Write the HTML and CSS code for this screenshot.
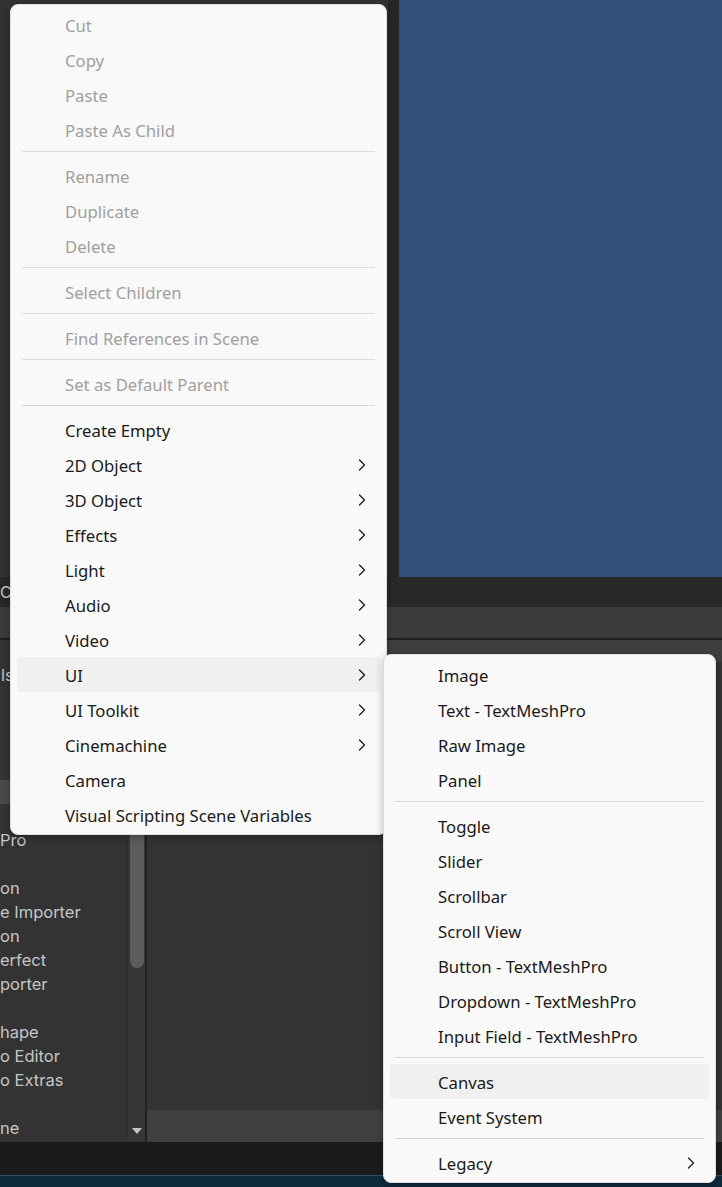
FILE: index.html
```html
<!DOCTYPE html>
<html>
<head>
<meta charset="utf-8">
<title>Hierarchy context menu</title>
<link rel="stylesheet" href="styles.css">
</head>
<body>
<div class="app">
  <div class="top">
    <div class="hier-top"></div>
    <div class="gutter"></div>
    <div class="scene"></div>
  </div>
  <div class="tabbar"><span class="tab">C</span></div>
  <div class="toolbar"></div>
  <div class="rule"></div>
  <div class="lower">
    <div class="tree">
      <div class="crumb">ls</div>
      <div class="rows">
        <div class="row sel"></div>
        <div class="row"></div>
        <div class="row">Pro</div>
        <div class="row"></div>
        <div class="row">on</div>
        <div class="row">e Importer</div>
        <div class="row">on</div>
        <div class="row">erfect</div>
        <div class="row">porter</div>
        <div class="row"></div>
        <div class="row">hape</div>
        <div class="row">o Editor</div>
        <div class="row">o Extras</div>
        <div class="row"></div>
        <div class="row">ne</div>
      </div>
    </div>
    <div class="scroll"><div class="thumb"></div><div class="arrow"></div></div>
    <div class="divider"></div>
    <div class="content">
      <div class="chead"></div>
      <div class="cbody"></div>
      <div class="cfoot"></div>
    </div>
  </div>
  <div class="status"></div>
  <div class="taskbar"></div>
</div>

<div class="menu main">
  <div class="item dis">Cut</div>
  <div class="item dis">Copy</div>
  <div class="item dis">Paste</div>
  <div class="item dis">Paste As Child</div>
  <div class="sep"></div>
  <div class="item dis">Rename</div>
  <div class="item dis">Duplicate</div>
  <div class="item dis">Delete</div>
  <div class="sep"></div>
  <div class="item dis">Select Children</div>
  <div class="sep"></div>
  <div class="item dis">Find References in Scene</div>
  <div class="sep"></div>
  <div class="item dis">Set as Default Parent</div>
  <div class="sep"></div>
  <div class="item">Create Empty</div>
  <div class="item">2D Object<svg class="chev" viewBox="0 0 8 12"><path d="M1.5 1 L6.5 6 L1.5 11"/></svg></div>
  <div class="item">3D Object<svg class="chev" viewBox="0 0 8 12"><path d="M1.5 1 L6.5 6 L1.5 11"/></svg></div>
  <div class="item">Effects<svg class="chev" viewBox="0 0 8 12"><path d="M1.5 1 L6.5 6 L1.5 11"/></svg></div>
  <div class="item">Light<svg class="chev" viewBox="0 0 8 12"><path d="M1.5 1 L6.5 6 L1.5 11"/></svg></div>
  <div class="item">Audio<svg class="chev" viewBox="0 0 8 12"><path d="M1.5 1 L6.5 6 L1.5 11"/></svg></div>
  <div class="item">Video<svg class="chev" viewBox="0 0 8 12"><path d="M1.5 1 L6.5 6 L1.5 11"/></svg></div>
  <div class="item hover">UI<svg class="chev" viewBox="0 0 8 12"><path d="M1.5 1 L6.5 6 L1.5 11"/></svg></div>
  <div class="item">UI Toolkit<svg class="chev" viewBox="0 0 8 12"><path d="M1.5 1 L6.5 6 L1.5 11"/></svg></div>
  <div class="item">Cinemachine<svg class="chev" viewBox="0 0 8 12"><path d="M1.5 1 L6.5 6 L1.5 11"/></svg></div>
  <div class="item">Camera</div>
  <div class="item">Visual Scripting Scene Variables</div>
</div>

<div class="menu sub">
  <div class="item">Image</div>
  <div class="item">Text - TextMeshPro</div>
  <div class="item">Raw Image</div>
  <div class="item">Panel</div>
  <div class="sep"></div>
  <div class="item">Toggle</div>
  <div class="item">Slider</div>
  <div class="item">Scrollbar</div>
  <div class="item">Scroll View</div>
  <div class="item">Button - TextMeshPro</div>
  <div class="item">Dropdown - TextMeshPro</div>
  <div class="item">Input Field - TextMeshPro</div>
  <div class="sep"></div>
  <div class="item hover">Canvas</div>
  <div class="item">Event System</div>
  <div class="sep"></div>
  <div class="item">Legacy<svg class="chev" viewBox="0 0 8 12"><path d="M1.5 1 L6.5 6 L1.5 11"/></svg></div>
</div>
</body>
</html>
```

FILE: styles.css
```css
* { box-sizing: border-box; }
html, body { margin: 0; padding: 0; }
body {
  width: 722px;
  height: 1187px;
  overflow: hidden;
  background: #333333;
  position: relative;
  font-family: "Noto Sans", "Liberation Sans", sans-serif;
}

.app { display: flex; flex-direction: column; height: 1187px; }

.top { display: grid; grid-template-columns: 388px 11px 1fr; height: 577px; }
.hier-top { background: #323232; }
.gutter { background: #262626; }
.scene { background: #314f7a; }

.tabbar {
  height: 30px;
  background: #282828;
  display: flex;
  align-items: center;
  overflow: hidden;
}
.tab {
  margin-left: 0;
  font-family: Inter, "Noto Sans", sans-serif;
  font-size: 16px;
  color: #c8c8c8;
}
.toolbar { height: 31px; background: #3b3b3b; }
.rule { height: 2px; background: #1f1f1f; }

.lower { display: flex; height: 502px; }
.tree {
  width: 127px;
  background: #333333;
  overflow: hidden;
  font-family: Inter, "Noto Sans", sans-serif;
  font-size: 16.5px;
  color: #c6c6c6;
}
.crumb {
  margin-top: 23px;
  height: 24px;
  line-height: 24px;
  padding-left: 1px;
  white-space: nowrap;
}
.rows { margin-top: 93px; }
.row {
  height: 24px;
  line-height: 24px;
  white-space: nowrap;
}
.row.sel { background: #4a4a4a; }

.scroll {
  width: 18px;
  background: #363636;
  border-left: 1px solid #2e2e2e;
  display: flex;
  flex-direction: column;
  align-items: center;
}
.thumb {
  margin-top: 150px;
  width: 14px;
  height: 178px;
  border-radius: 7px;
  background: #5d5d5d;
}
.arrow {
  margin-top: auto;
  margin-bottom: 8px;
  width: 0;
  height: 0;
  border-left: 5px solid transparent;
  border-right: 5px solid transparent;
  border-top: 6px solid #c4c4c4;
}
.divider { width: 2px; background: #222222; }
.content { flex: 1; display: flex; flex-direction: column; }
.chead { height: 22px; background: #3e3e3e; }
.cbody { flex: 1; background: #333333; }
.cfoot { height: 32px; background: #404040; }

.status { height: 33px; background: #1b1b1b; }
.taskbar { flex: 1; background: #0e2a3d; border-top: 1px solid #33505f; }

/* Context menus */
.menu {
  position: absolute;
  background: #f9f9f9;
  border: 1px solid #dedede;
  border-radius: 8px;
  padding: 2px 0;
  box-shadow: 0 3px 8px rgba(0, 0, 0, 0.28);
}
.menu.main { left: 10px; top: 4px; width: 377px; }
.menu.sub { left: 383px; top: 654px; width: 333px; }

.item {
  height: 35px;
  margin: 0 6px;
  padding: 1px 14px 0 48px;
  border-radius: 4px;
  display: flex;
  align-items: center;
  justify-content: space-between;
  font-size: 16.7px;
  color: #1a1a1a;
  white-space: nowrap;
}
.item.dis { color: #a0a0a0; }
.item.hover { background: #f0f0f0; }
.sep { height: 1px; margin: 4px 11px 6px; background: #dadada; }

.chev { width: 8px; height: 12px; flex: none; }
.chev path { fill: none; stroke: #222222; stroke-width: 1.4; stroke-linecap: round; stroke-linejoin: round; }
```
